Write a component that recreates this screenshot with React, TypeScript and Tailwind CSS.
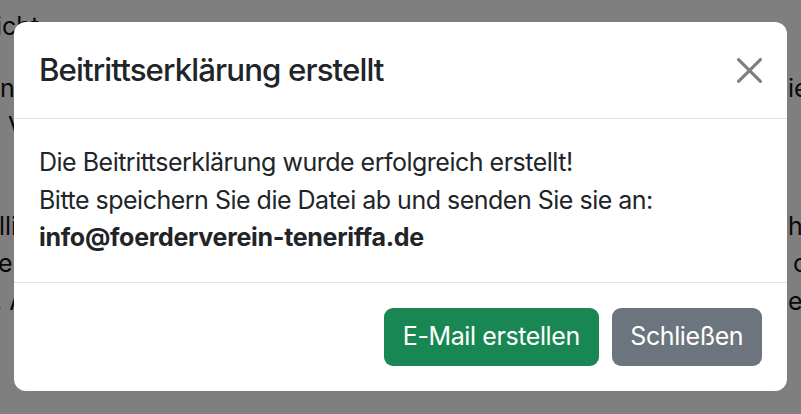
import React from "react";

const font = { fontFamily: "Inter, 'Liberation Sans', sans-serif" };

function BgLine({ left, leftPad = 0, right, rightPad = 0 }: { left?: string; leftPad?: number; right?: string; rightPad?: number }) {
  return (
    <div className="flex h-[37.5px] items-center overflow-hidden whitespace-nowrap text-[25px] leading-[37.5px] text-[#111]">
      <div className="w-[788px] shrink-0">
        {left ? <span style={{ marginLeft: leftPad }}>{left}</span> : null}
      </div>
      {right ? <span style={{ marginLeft: rightPad }}>{right}</span> : null}
    </div>
  );
}

export default function App() {
  return (
    <div className="relative h-[414px] w-[801px] overflow-hidden bg-white" style={font}>
      {/* page underneath */}
      <div className="mt-[-30px] flex flex-col">
        <div className="flex h-[37.5px] items-start overflow-hidden whitespace-nowrap text-[25px] leading-[28px] text-[#111]">
          <span className="ml-[-6px]">g</span>
          <span className="ml-[725px]">g</span>
        </div>
        <BgLine left="icht" leftPad={-4} />
        <div className="h-[25px]" />
        <BgLine left="n" right="ie" />
        <BgLine left="V" leftPad={8} />
        <div className="h-[25px]" />
        <BgLine />
        <BgLine left="lli" leftPad={-1} right="h" />
        <BgLine left="er" leftPad={-2} right="c" rightPad={5} />
        <BgLine left=". A" leftPad={-5} right="er" />
      </div>

      {/* backdrop */}
      <div className="absolute inset-0 bg-black/50" />

      {/* modal */}
      <div className="absolute left-[14px] top-[22px] flex w-[773px] flex-col rounded-[12px] bg-white text-[#212529]">
        <div className="flex items-center justify-between border-b border-[#dee2e6] p-[25px] pb-[24px]">
          <h5 className="text-[31.25px] font-medium leading-[47px] tracking-[-0.9px]">Beitrittserklärung erstellt</h5>
          <button className="flex h-[25px] w-[25px] items-center justify-center opacity-50">
            <svg viewBox="0 0 16 16" width="25" height="25">
              <path
                fill="#000"
                d="M.293.293a1 1 0 0 1 1.414 0L8 6.586 14.293.293a1 1 0 1 1 1.414 1.414L9.414 8l6.293 6.293a1 1 0 0 1-1.414 1.414L8 9.414l-6.293 6.293a1 1 0 0 1-1.414-1.414L6.586 8 .293 1.707a1 1 0 0 1 0-1.414z"
              />
            </svg>
          </button>
        </div>
        <div className="p-[25px] text-[25px] leading-[37.5px] tracking-[-0.5px]">
          <div>Die Beitrittserklärung wurde erfolgreich erstellt!</div>
          <div>Bitte speichern Sie die Datei ab und senden Sie sie an:</div>
          <div className="font-bold tracking-[-0.3px]">info@foerderverein-teneriffa.de</div>
        </div>
        <div className="flex items-center justify-end gap-[13px] border-t border-[#dee2e6] p-[25px]">
          <button className="h-[58px] rounded-[9px] bg-[#198754] px-[18.75px] text-[25px] leading-[37.5px] tracking-[-0.4px] text-white">
            E-Mail erstellen
          </button>
          <button className="h-[58px] rounded-[9px] bg-[#6c757d] px-[18.75px] text-[25px] leading-[37.5px] tracking-[-0.4px] text-white">
            Schließen
          </button>
        </div>
      </div>
    </div>
  );
}
